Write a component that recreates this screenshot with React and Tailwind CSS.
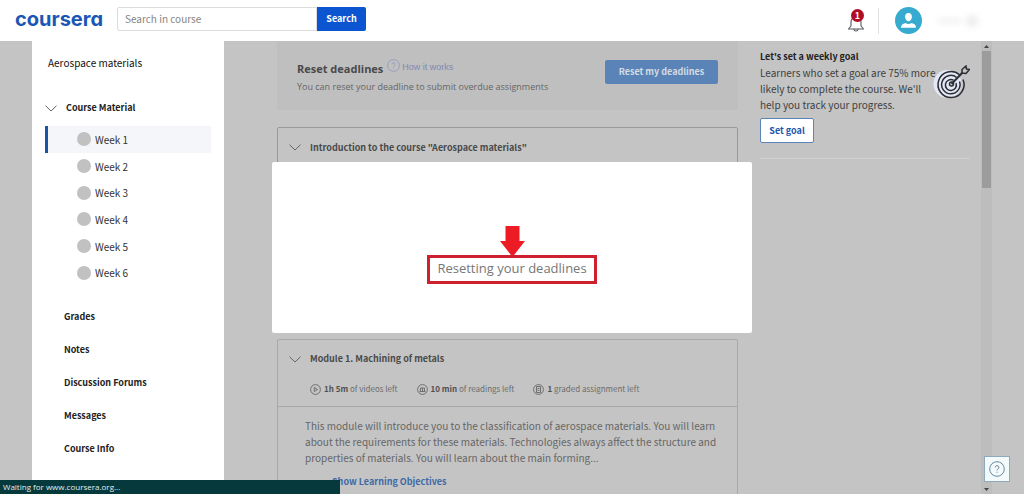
import React from 'react';

const weeks = ['Week 1', 'Week 2', 'Week 3', 'Week 4', 'Week 5', 'Week 6'];
const links = ['Grades', 'Notes', 'Discussion Forums', 'Messages', 'Course Info'];

const Chevron = ({ className }) => (
  <svg className={className} width="12" height="7" viewBox="0 0 12 7" fill="none" stroke="currentColor">
    <path d="M0.5 0.7 L6 6 L11.5 0.7" />
  </svg>
);

const BellIcon = () => (
  <svg width="18" height="18" viewBox="0 0 18 18" fill="none" stroke="#55595e" strokeWidth="1.1" strokeLinecap="round" strokeLinejoin="round">
    <path d="M4 12V8a5 5 0 0 1 10 0v4l2.5 3h-15z" />
    <path d="M7 15.2a2 1.8 0 0 0 4 0" />
  </svg>
);

const Avatar = () => (
  <svg width="27" height="27" viewBox="0 0 27 27">
    <circle cx="13.5" cy="13.5" r="13.5" fill="#37aad0" />
    <path d="M13.5 6c2.4 0 3.6 1.7 3.4 4-.2 2.6-1.7 4.3-3.4 4.3s-3.2-1.7-3.4-4.3c-.2-2.3 1-4 3.4-4z" fill="#fff" />
    <path d="M6 20.8c0-3 1.5-4 4.5-4.8 1.8 1.2 4.2 1.2 6 0 3 .8 4.5 1.8 4.5 4.8z" fill="#fff" />
  </svg>
);

const TargetIcon = () => (
  <svg className="shrink-0" width="38" height="35" viewBox="0 0 38 35" fill="none" stroke="#2b2d33" strokeWidth="1.5">
    <circle cx="15.5" cy="19" r="14" fill="#e3e7f6" stroke="none" />
    <path d="M27.5 9.7A13 13 0 1 0 31 14.5" />
    <path d="M24.7 12.5A9.2 9.2 0 1 0 27.5 16.5" />
    <path d="M21.5 15.2A5.5 5.5 0 1 0 24 18" />
    <circle cx="19.5" cy="19" r="2" />
    <path d="M19.5 19L31.5 6.5" strokeWidth="2" />
    <path d="M30 8V4.5L34 1l.5 3 3 .5-3.5 4z" fill="#c4c4c4" />
  </svg>
);

const HelpCircle = ({ size, className }) => (
  <svg className={className} width={size} height={size} viewBox="0 0 16 16" fill="none" stroke="currentColor">
    <circle cx="8" cy="8" r="7.3" />
    <path d="M6.3 6.4a1.8 1.8 0 1 1 2.6 1.6c-.7.4-.9.7-.9 1.4M8 10.8v1" />
  </svg>
);

const StatIcon = ({ children }) => (
  <svg width="11" height="11" viewBox="0 0 11 11" fill="none" stroke="#666" strokeWidth="0.9">
    <circle cx="5.5" cy="5.5" r="4.9" />
    {children}
  </svg>
);

const Header = () => (
  <header className="flex h-[41px] shrink-0 items-center bg-white pr-[46px] pl-[15px]">
    <a href="#home" className="w-[102px] pb-1 font-['Inter'] text-[20px] leading-6 font-bold text-[#1a57b5] [font-feature-settings:'cv11']">
      coursera
    </a>
    <form className="mb-1 flex h-6">
      <input
        type="text"
        aria-label="Search in course"
        placeholder="Search in course"
        className="w-[200px] rounded-l-xs border border-[#dcdcdc] px-[7px] text-[10px] outline-none placeholder:text-[#858585]"
      />
      <button type="button" className="w-[49px] rounded-r-xs bg-[#0b56d0] text-[9px] font-bold text-white">
        Search
      </button>
    </form>
    <div className="ml-auto flex items-center">
      <button type="button" aria-label="Notifications" className="relative mt-1">
        <BellIcon />
        <span className="absolute -top-[5px] left-1 flex size-[13px] items-center justify-center rounded-full bg-[#b00d24] text-[9px] leading-none font-bold text-white">
          1
        </span>
      </button>
      <div className="ml-[13px] h-[26px] w-px bg-[#e2e2e2]" />
      <button type="button" aria-label="Account" className="ml-4 flex items-center">
        <Avatar />
        <span className="ml-4 h-1 w-6 rounded-full bg-[#ececec] blur-[3px]" />
        <span className="ml-1 h-3 w-3 rounded-full bg-[#ececec] blur-[3px]" />
      </button>
    </div>
  </header>
);

const Sidebar = () => (
  <nav className="ml-8 w-48 shrink-0 bg-white px-[13px] pt-3 text-[#222]">
    <p className="pl-[3px] text-[10px] leading-5 text-[#111]">Aerospace materials</p>
    <button type="button" className="mt-[25px] flex h-5 items-center text-[9px] font-bold">
      <Chevron className="mr-[9px] text-[#666]" />
      Course Material
    </button>
    <ul className="mt-2 flex h-40 flex-col">
      {weeks.map((week, i) => (
        <li key={week} className="flex flex-1">
          <a
            href="#week"
            className={
              i === 0
                ? 'flex flex-1 items-center border-l-3 border-[#1b55a5] bg-[#f5f6fa] pl-[29px] text-[10px] text-[#333]'
                : 'flex flex-1 items-center border-l-3 border-transparent pl-[29px] text-[10px] text-[#333]'
            }
          >
            <span className="mr-1 size-[14px] rounded-full bg-[#c1c1c1]" />
            {week}
          </a>
        </li>
      ))}
    </ul>
    <ul className="mt-[14px] pl-[19px]">
      {links.map((link) => (
        <li key={link} className="flex h-[33px] items-center">
          <a href="#section" className="text-[9px] font-bold">{link}</a>
        </li>
      ))}
    </ul>
  </nav>
);

const Main = () => (
  <main className="ml-[53px] min-w-0 flex-1 text-[#666]">
    <section className="flex h-[69px] items-center justify-between bg-[#bfbfbf] px-5">
      <div className="pt-1 font-['Open_Sans']">
        <div className="flex h-[18px] items-center">
          <h2 className="text-[11px] font-bold text-[#4a4a4a]">Reset deadlines</h2>
          <HelpCircle size={13} className="mb-2 ml-1 text-[#8f97bb]" />
          <a href="#how" className="mb-1 ml-[2px] font-['Liberation_Sans'] text-[9px] text-[#8388b3]">How it works</a>
        </div>
        <p className="text-[9px] leading-4">You can reset your deadline to submit overdue assignments</p>
      </div>
      <button type="button" className="mb-2 h-6 w-[113px] rounded-xs bg-[#5a84b8] text-[9px] font-bold text-[#d5dbe3]">
        Reset my deadlines
      </button>
    </section>
    <section className="mt-[17px] h-[195px] rounded-xs border border-[#999]">
      <h3 className="flex h-[39px] items-center pl-[11px] text-[9px] font-bold text-[#4a4a4a]">
        <Chevron className="mr-[9px] text-[#666]" />
        Introduction to the course "Aerospace materials"
      </h3>
    </section>
    <section className="mt-[17px] h-[200px] rounded-xs border border-[#a8a8a8]">
      <div className="h-[67px] border-b border-[#a8a8a8]">
        <h3 className="flex h-[38px] items-center pl-[11px] text-[9px] font-bold text-[#4a4a4a]">
          <Chevron className="mr-[9px] text-[#666]" />
          Module 1. Machining of metals
        </h3>
        <ul className="flex gap-[19px] pl-8 text-[8px] leading-[22px] text-[#6c6c6c]">
          <li className="flex items-center gap-[3px]">
            <StatIcon><path d="M4.3 3.5v4l3.2-2z" /></StatIcon>
            <span><b className="text-[#505050]">1h 5m</b> of videos left</span>
          </li>
          <li className="flex items-center gap-[3px]">
            <StatIcon><path d="M2.5 7.5h6M3.5 7V4h4v3M5.5 4v3" /></StatIcon>
            <span><b className="text-[#505050]">10 min</b> of readings left</span>
          </li>
          <li className="flex items-center gap-[3px]">
            <StatIcon><path d="M3.5 2.5h4v6h-4zM4.5 4.5h2M4.5 6.3h2" /></StatIcon>
            <span><b className="text-[#505050]">1</b> graded assignment left</span>
          </li>
        </ul>
      </div>
      <p className="pt-[11px] pl-[27px] text-[10px] leading-4">
        This module will introduce you to the classification of aerospace materials. You will learn
        <br />
        about the requirements for these materials. Technologies always affect the structure and
        <br />
        properties of materials. You will learn about the main forming...
      </p>
      <a href="#objectives" className="mt-2 ml-[54px] block text-[9px] leading-4 font-bold text-[#4169a5]">
        Show Learning Objectives
      </a>
    </section>
  </main>
);

const Goal = () => (
  <aside className="ml-[22px] w-[221px] shrink-0 pt-2 pr-[11px] text-[#3f3f3f]">
    <div className="flex justify-between">
      <div className="min-w-0 whitespace-nowrap">
        <h2 className="text-[9px] leading-4 font-bold text-[#222]">Let's set a weekly goal</h2>
        <p className="text-[10px] leading-4">
          Learners who set a goal are 75% more
          <br />
          likely to complete the course. We'll
          <br />
          help you track your progress.
        </p>
      </div>
      <div className="shrink-0 pt-4">
        <TargetIcon />
      </div>
    </div>
    <button type="button" className="mt-[5px] h-[25px] w-[54px] rounded-xs border border-[#5a84b8] bg-white text-[9px] font-bold text-[#1d56ad]">
      Set goal
    </button>
    <hr className="mt-[15px] border-[#cfcfcf]" />
  </aside>
);

const Scrollbar = () => (
  <div className="mr-8 ml-auto flex w-[11px] shrink-0 flex-col items-center bg-[#bdbdbd]">
    <span className="flex h-[10px] items-center text-[#444]">
      <svg width="5" height="3" viewBox="0 0 5 3" fill="currentColor"><path d="M0 3L2.5 0L5 3z" /></svg>
    </span>
    <span className="h-[137px] w-[9px] bg-[#9c9c9c]" />
    <span className="mt-auto flex h-[10px] items-center text-[#444]">
      <svg width="5" height="3" viewBox="0 0 5 3" fill="currentColor"><path d="M0 0L2.5 3L5 0z" /></svg>
    </span>
  </div>
);

const Modal = () => (
  <div className="fixed inset-0 flex items-center justify-center">
    <div role="dialog" aria-label="Resetting your deadlines" className="flex h-[171px] w-[480px] flex-col items-center justify-center rounded-xs bg-white pt-4">
      <svg width="25" height="31" viewBox="0 0 25 31" fill="#ed1c24">
        <path d="M5.5 0H19.5V15H25L12.5 31L0 15H5.5z" />
      </svg>
      <p className="-mt-[2px] flex h-[29px] w-[170px] items-center justify-center border-3 border-[#cf2030] pb-[2px] font-['Open_Sans'] text-[13px] whitespace-nowrap text-[#777]">
        Resetting your deadlines
      </p>
    </div>
  </div>
);

const App = () => {
  return (
    <div className="flex h-screen flex-col overflow-hidden bg-[#c4c4c4] font-['Noto_Sans_CJK_SC',sans-serif]">
      <Header />
      <div className="flex min-h-0 flex-1 overflow-hidden">
        <Sidebar />
        <Main />
        <Goal />
        <Scrollbar />
      </div>
      <Modal />
      <button type="button" aria-label="Help" className="fixed right-[14px] bottom-3 flex size-[26px] items-center justify-center border border-[#8fa9bd] bg-[#f2fafc] text-[#6b8a99]">
        <HelpCircle size={16} />
      </button>
      <div className="fixed bottom-0 left-0 h-[14px] w-[340px] bg-[#05393b] pl-[3px] font-['Open_Sans'] text-[8px] leading-[14px] text-[#e4eeee]">
        Waiting for www.coursera.org...
      </div>
    </div>
  );
};

export default App;
